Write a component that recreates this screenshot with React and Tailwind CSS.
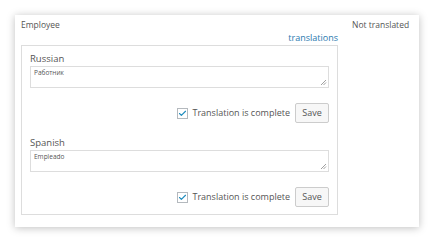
import { Check } from 'lucide-react'

const LANGS = [
  { name: 'Russian', value: 'Работник' },
  { name: 'Spanish', value: 'Empleado' },
]

function Grip() {
  return (
    <svg className="absolute right-[1px] bottom-[1px]" width="7" height="7" viewBox="0 0 7 7">
      <path d="M6 1 L1 6 M6 3.5 L3.5 6" stroke="#888" strokeWidth="0.8" />
    </svg>
  )
}

function LangBlock({ lang }) {
  return (
    <div className="flex flex-col">
      <span className="text-[9.5px] leading-[12px] text-[#555]">{lang.name}</span>
      <div className="relative mt-[1px] h-[22px] border border-[#ddd] bg-white px-[3px] pt-[2px]">
        <span className="block text-[6.5px] leading-[8px] text-[#555]">{lang.value}</span>
        <Grip />
      </div>
      <div className="mt-[15px] flex items-center justify-end">
        <span className="flex h-[11px] w-[11px] items-center justify-center border border-[#b4b9be] bg-white">
          <Check size={9} strokeWidth={3} color="#1e8cbe" />
        </span>
        <span className="ml-[4px] text-[9px] leading-[12px] text-[#555]">Translation is complete</span>
        <span className="ml-[5px] flex h-[20px] w-[34px] items-center justify-center rounded-[2px] border border-[#ccc] bg-[#f7f7f7] text-[9px] text-[#555]">
          Save
        </span>
      </div>
    </div>
  )
}

export default function App() {
  return (
    <div
      className="h-[242px] w-[434px] bg-white pt-[15px] pl-[15px]"
      style={{ fontFamily: '"Open Sans", "Noto Sans", sans-serif' }}
    >
      <div className="flex h-[212px] w-[404px] bg-white shadow-[0_1px_8px_rgba(0,0,0,0.25)]">
        <div className="flex w-[323px] flex-col pl-[6px] pt-[3px]">
          <span className="block text-[8.5px] leading-[14px] text-[#555]">Employee</span>
          <span className="block self-end text-[9px] leading-[12px] text-[#2a7aaf]">translations</span>
          <div className="mt-[1px] flex h-[170px] flex-col gap-[14px] border border-[#ddd] px-[8px] pt-[7px]">
            {LANGS.map((l) => (
              <LangBlock key={l.name} lang={l} />
            ))}
          </div>
        </div>
        <div className="pl-[14px] pt-[3px]">
          <span className="block text-[8.5px] leading-[14px] text-[#555]">Not translated</span>
        </div>
      </div>
    </div>
  )
}
